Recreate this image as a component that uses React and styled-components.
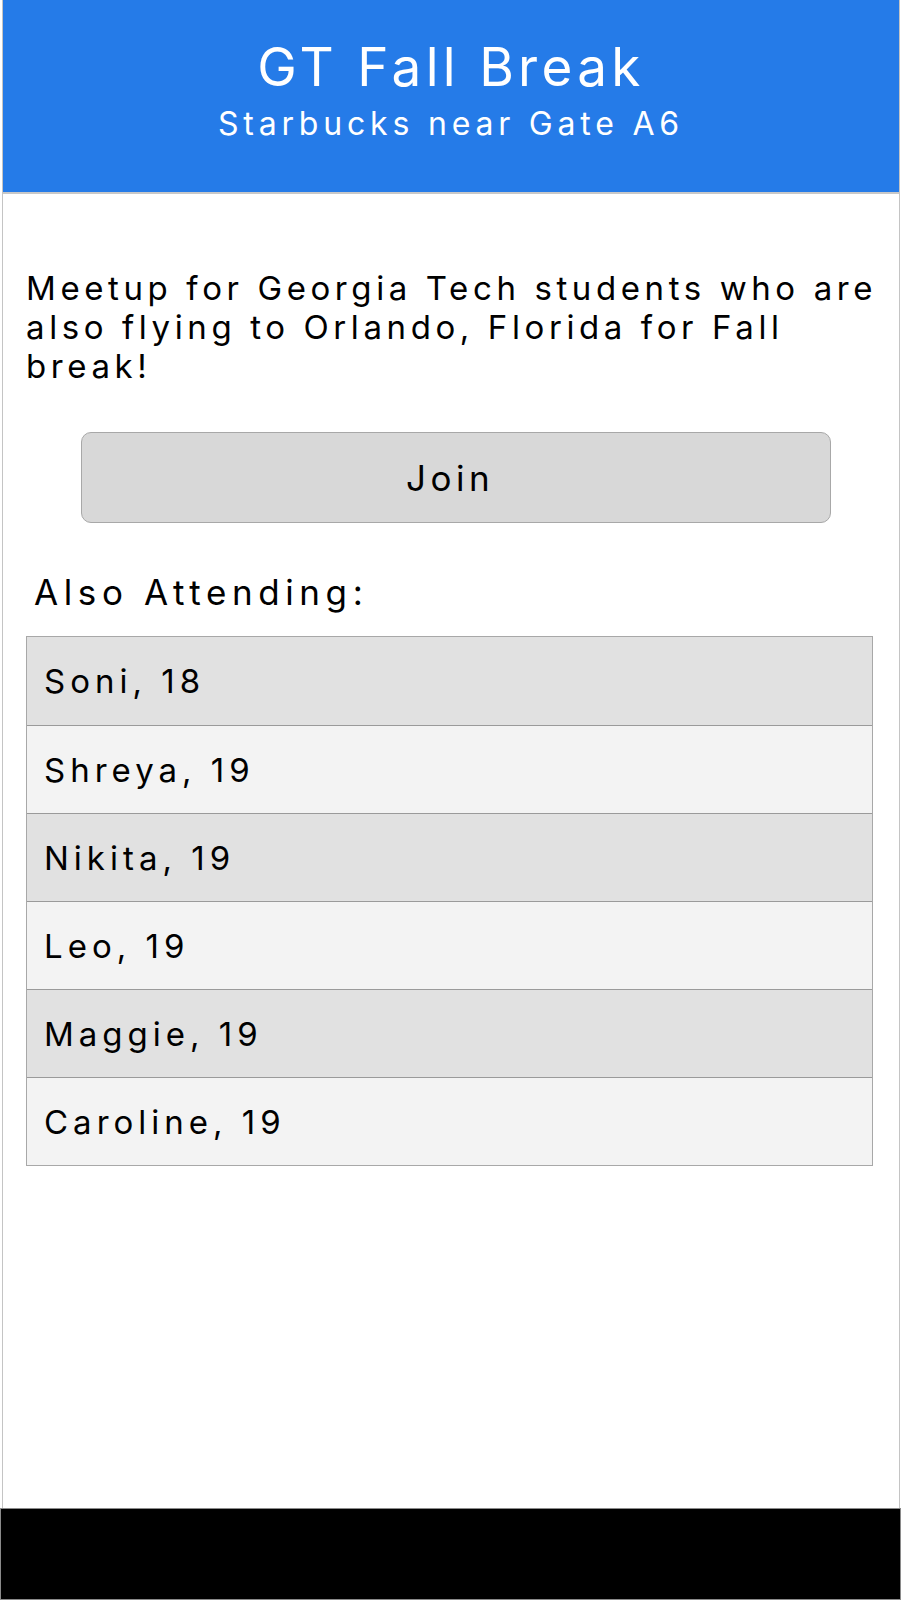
import React from "react";
import styled, { createGlobalStyle } from "styled-components";

const GlobalStyle = createGlobalStyle`
  html, body {
    margin: 0;
    padding: 0;
    background: #fff;
  }
  body {
    font-family: "Inter", "Roboto", "Liberation Sans", sans-serif;
    color: #000;
  }
`;

const StyledPage = styled.div`
  width: 901px;
  height: 1600px;
  box-sizing: border-box;
  display: flex;
  flex-direction: column;
`;

const StyledScreen = styled.div`
  flex: 1;
  margin: 0 1px 0 2px;
  border-left: 1px solid #c4c4c4;
  border-right: 1px solid #c4c4c4;
  display: flex;
  flex-direction: column;
`;

const StyledHeader = styled.header`
  height: 194px;
  background: #257be8;
  border-bottom: 2px solid #c8c8c8;
  color: #fff;
  display: flex;
  flex-direction: column;
  align-items: center;
  padding-top: 37px;
  box-sizing: border-box;

  .title {
    font-size: 53px;
    line-height: 60px;
    letter-spacing: 4.3px;
    font-weight: 400;
  }
  .subtitle {
    font-size: 32px;
    line-height: 38px;
    letter-spacing: 4.8px;
    margin-top: 8px;
  }
`;

const StyledContent = styled.main`
  padding: 75px 10px 0 23px;
  display: flex;
  flex-direction: column;
`;

const Description = styled.p`
  margin: 0;
  font-size: 33px;
  line-height: 39px;
  letter-spacing: 4.6px;
`;

const JoinButton = styled.button`
  align-self: flex-start;
  margin: 46px 0 0 55px;
  padding: 0 12px 0 0;
  width: 750px;
  height: 91px;
  background: #d8d8d8;
  border: 1px solid #a8a8a8;
  border-radius: 10px;
  font-family: inherit;
  font-size: 35px;
  letter-spacing: 4.5px;
  color: #000;
`;

const SectionTitle = styled.h2`
  margin: 49px 0 0 8px;
  font-size: 35px;
  line-height: 40px;
  font-weight: 400;
  letter-spacing: 5.6px;
`;

const AttendeeList = styled.ul`
  list-style: none;
  margin: 24px 0 0 0;
  padding: 0;
  width: 847px;
  border: 1px solid #a8a8a8;
  box-sizing: border-box;
`;

const AttendeeRow = styled.li`
  height: 88px;
  box-sizing: border-box;
  display: flex;
  align-items: center;
  padding-left: 17px;
  font-size: 33px;
  letter-spacing: 5px;
  background: ${(p) => (p.$odd ? "#f3f3f3" : "#e1e1e1")};
  border-top: ${(p) => (p.$first ? "none" : "1px solid #9a9a9a")};
`;

const BottomBar = styled.div`
  height: 92px;
  background: #000;
  border: 1px solid #8a8a8a;
  box-sizing: border-box;
`;

const attendees = [
  "Soni, 18",
  "Shreya, 19",
  "Nikita, 19",
  "Leo, 19",
  "Maggie, 19",
  "Caroline, 19",
];

const App = () => {
  return (
    <StyledPage>
      <GlobalStyle />
      <StyledScreen>
        <StyledHeader>
          <div className="title">GT Fall Break</div>
          <div className="subtitle">Starbucks near Gate A6</div>
        </StyledHeader>
        <StyledContent>
          <Description>
            Meetup for Georgia Tech students who are also flying to Orlando,
            Florida for Fall break!
          </Description>
          <JoinButton>Join</JoinButton>
          <SectionTitle>Also Attending:</SectionTitle>
          <AttendeeList>
            {attendees.map((a, i) => (
              <AttendeeRow key={a} $odd={i % 2 === 1} $first={i === 0}>
                {a}
              </AttendeeRow>
            ))}
          </AttendeeList>
        </StyledContent>
      </StyledScreen>
      <BottomBar />
    </StyledPage>
  );
};

export default App;
